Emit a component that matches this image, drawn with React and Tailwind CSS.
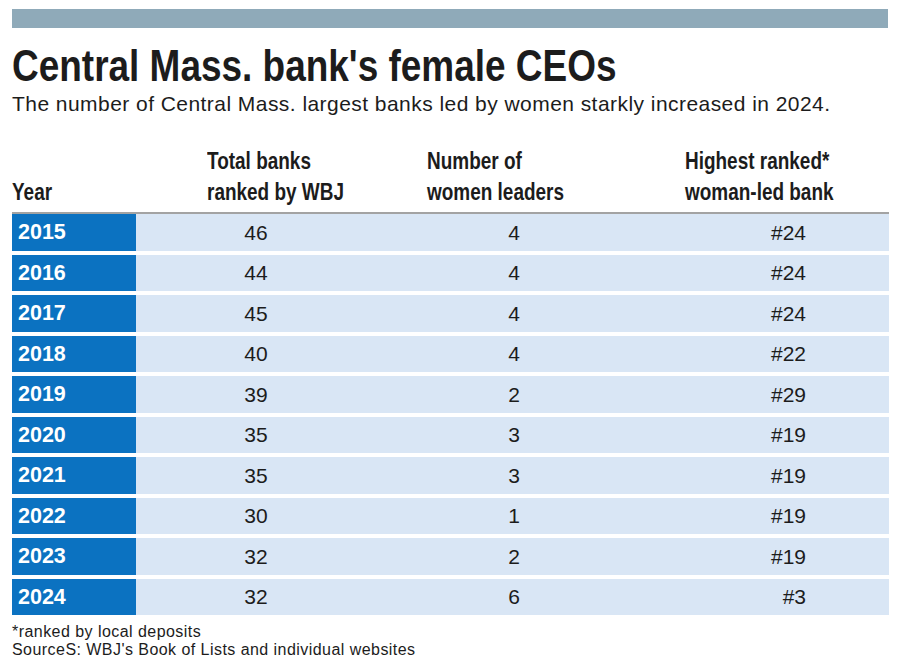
import React from "react";

const rows = [
  ["2015", "46", "4", "#24"],
  ["2016", "44", "4", "#24"],
  ["2017", "45", "4", "#24"],
  ["2018", "40", "4", "#22"],
  ["2019", "39", "2", "#29"],
  ["2020", "35", "3", "#19"],
  ["2021", "35", "3", "#19"],
  ["2022", "30", "1", "#19"],
  ["2023", "32", "2", "#19"],
  ["2024", "32", "6", "#3"],
];

function Head({ children }) {
  return <div className="origin-left scale-x-[0.79] whitespace-nowrap">{children}</div>;
}

export default function App() {
  return (
    <div className="w-[900px] h-[671px] bg-white overflow-hidden px-[12px] pt-[9px] text-[#1c1c1c]" style={{ fontFamily: '"Liberation Sans", Arial, sans-serif' }}>
      <div className="h-[19px] w-[876px] bg-[#8faab9]" />
      <h1 className="mt-[16px] text-[44px] leading-[44px] font-bold whitespace-nowrap origin-left scale-x-[0.84]">
        Central Mass. bank's female CEOs
      </h1>
      <p className="mt-[3.5px] text-[21px] leading-[24px] tracking-[0.45px] whitespace-nowrap">
        The number of Central Mass. largest banks led by women starkly increased in 2024.
      </p>
      <div className="mt-[29.5px] w-[877px]">
        <div className="grid grid-cols-[124px_240px_276px_1fr] items-end text-[24px] leading-[31px] font-bold pb-[5px] border-b-[2px] border-[#a3a3a3]">
          <div><Head>Year</Head></div>
          <div className="pl-[71px]"><Head>Total banks<br />ranked by WBJ</Head></div>
          <div className="pl-[51px]"><Head>Number of<br />women leaders</Head></div>
          <div className="pl-[33px]"><Head>Highest ranked*<br />woman-led bank</Head></div>
        </div>
        <div className="flex flex-col gap-[4px]">
          {rows.map((r) => (
            <div key={r[0]} className="grid grid-cols-[124px_240px_276px_1fr] h-[36.5px] items-center bg-[#d9e6f5] text-[21px]">
              <div className="h-full bg-[#0b72c1] text-white font-bold text-[21.5px] pl-[6px] flex items-center">{r[0]}</div>
              <div className="text-center">{r[1]}</div>
              <div className="text-center">{r[2]}</div>
              <div className="text-right pr-[83px]">{r[3]}</div>
            </div>
          ))}
        </div>
      </div>
      <div className="mt-[7.5px] text-[16px] leading-[18.5px] tracking-[0.45px]">
        <div>*ranked by local deposits</div>
        <div>SourceS: WBJ's Book of Lists and individual websites</div>
      </div>
    </div>
  );
}
